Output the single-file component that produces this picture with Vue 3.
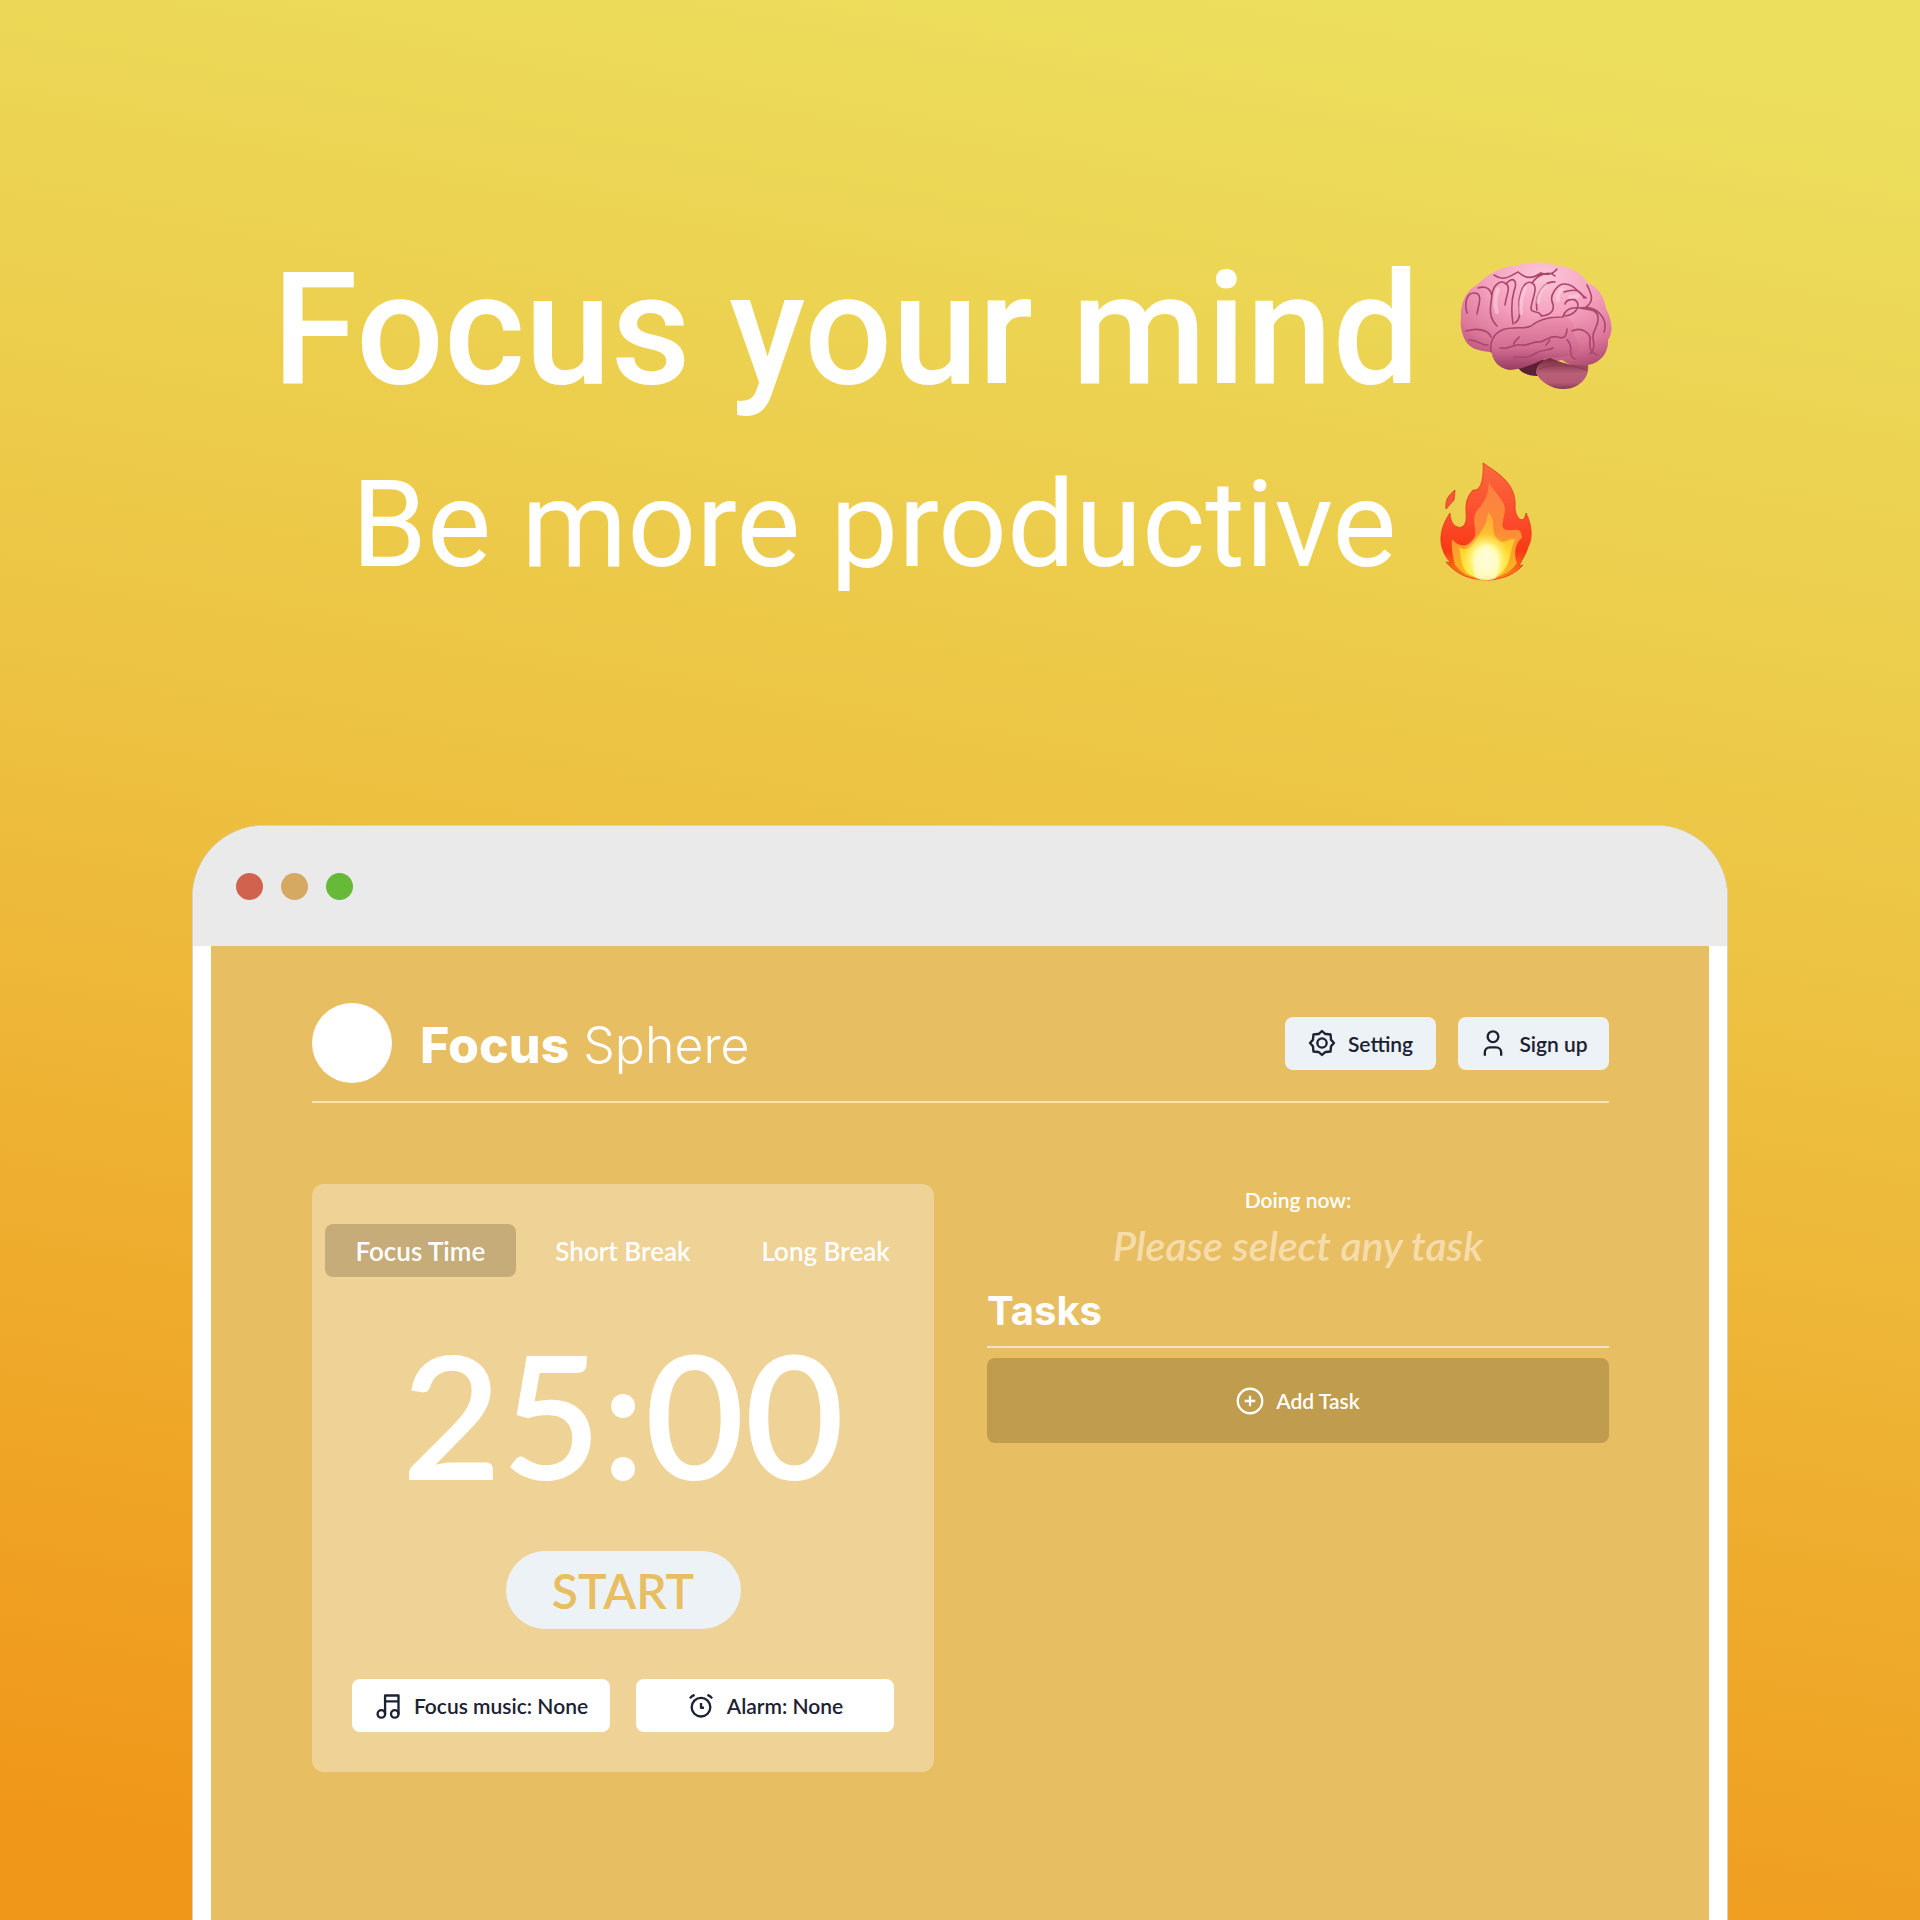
<script setup>
import { ref } from 'vue'
const modes = ['Focus Time', 'Short Break', 'Long Break']
const active = ref('Focus Time')
</script>

<template>
  <main class="page">
    <section class="hero">
      <h1>
        <span>Focus your mind</span>
        <svg class="brain" viewBox="0 0 152 128" aria-hidden="true">
          <defs>
            <radialGradient id="lobe" cx="0.55" cy="0.12" r="0.95">
              <stop offset="0" stop-color="#fdc6d8" />
              <stop offset="0.4" stop-color="#f5a2be" />
              <stop offset="0.75" stop-color="#dc7699" />
              <stop offset="1" stop-color="#a9476c" />
            </radialGradient>
            <linearGradient id="temporal" x1="0" y1="0" x2="0" y2="1">
              <stop offset="0" stop-color="#ee8fae" />
              <stop offset="0.6" stop-color="#d06c90" />
              <stop offset="1" stop-color="#993a60" />
            </linearGradient>
            <linearGradient id="stem" x1="0" y1="0" x2="0" y2="1">
              <stop offset="0" stop-color="#74283f" />
              <stop offset="0.5" stop-color="#b85f76" />
              <stop offset="0.8" stop-color="#b65a73" />
              <stop offset="1" stop-color="#86374f" />
            </linearGradient>
          </defs>
          <path fill="#5c2036" d="M58 106l16-16h20l-10 21-7 3c-8 0-14-2-19-8z" />
          <path fill="url(#lobe)" d="M1 55c-1-13 5-27 16-32C27 12 42 4 58 3c14-4 30-3 41 1 12 1 22 7 28 16 11 5 18 16 19 27 7 12 7 24 2 31 1 12-7 23-20 25-10 3-19 0-26-5-12 3-22 1-31-7L30 90c-12-1-21-4-25-12C1 70 0 63 1 55z" />
          <path fill="url(#stem)" d="M76 111c0-8 6-13 14-15 12 5 26 9 38 7 2 11-8 24-24 24-14 0-24-8-28-16z" />
          <path fill="none" stroke="#8b3a54" stroke-width="1" d="M79 107c14-6 32-4 48 1" />
          <path fill="url(#temporal)" d="M31 86c0-13 9-20 22-20 8-1 12 1 17-1 10-9 21-9 32-10 8 0 12 5 12 13 0 9 6 12 6 18-3 8-20 10-34 10-10 5-22 11-36 12-11-1-19-10-19-22z" />
          <g fill="none" stroke="#a8476b" stroke-width="1.6" stroke-linecap="round">
            <path d="M31 90c-2-16 8-24 22-24 8-1 12 1 18-2 10-8 21-9 32-9 2-8 9-10 17-9 9 2 18 1 18 10 1 9-6 12-5 20 1 7 2 11-3 16" />
            <path d="M7 51c-3-11 0-20 7-20 10 0 4 13 3 21M18 26c9-3 13 2 14 8M37 64c-10-10-6-21-5-31 1-10 8-15 13-12 7 3 1 12 0 22" />
            <path d="M46 22c7-9 12-3 8 7-3 11-3 20-1 33M55 61c9-6 1-17 5-27 2-9 6-16 12-13 7 3 0 16-1 25-1 6 10 2 10 8M72 21c7-10 18-12 23-7M77 48c-3-18 8-29 18-28M81 54c12-1 13-7 12-12-5-9 5-19 10-20 11-1 15 9 23 14M104 30c14-5 18 1 20 6M105 54c10-1 15-9 12-14-3-5-11-2-12 2M34 13c10 7 16 1 24-3 8 7 14 7 23 1 7 3 12 1 16-4M126 45c9-6 5-14 1-22M121 46c18-3 27 13 23 24" />
            <path d="M6 69c10-3 22-2 25 6M9 78c8-1 12 6 19 5M40 86c10 2 13-5 22-3 8 1 9-4 18-3 8-2 10-7 18-5 7 3 9-3 9-8M54 95c9 0 14 2 22-4 7-4 13-2 17-5M54 83c-1-4 3-5 5-8M86 83l4-5M107 78c8 6-1 14 8 19M112 69c10-5 19 3 18 9-1 7 1 13 7 15" />
          </g>
          <g fill="none" stroke="#ffd7e3" stroke-opacity="0.5" stroke-width="4" stroke-linecap="round">
            <path d="M38 27c-3 8-4 15-1 23M65 26c-5 11-5 18-4 25M86 23c-7 6-8 11-8 17M102 27c-5 5-5 8-4 11M110 35l8-1" />
          </g>
        </svg>
      </h1>
      <p class="tagline">
        <span>Be more productive</span>
        <svg class="fire" viewBox="0 0 92 120" aria-hidden="true">
          <defs>
            <linearGradient id="flameOuter" x1="0" y1="0" x2="0" y2="1">
              <stop offset="0" stop-color="#fa6a3c" />
              <stop offset="0.5" stop-color="#fb4a2c" />
              <stop offset="0.75" stop-color="#f83a12" />
              <stop offset="1" stop-color="#fb8a18" />
            </linearGradient>
            <linearGradient id="flameMid" x1="0" y1="0" x2="0" y2="1">
              <stop offset="0" stop-color="#fb8144" />
              <stop offset="0.5" stop-color="#fc8b35" />
              <stop offset="1" stop-color="#ffbd1c" />
            </linearGradient>
            <linearGradient id="flameInner" x1="0" y1="0" x2="0" y2="1">
              <stop offset="0" stop-color="#fda638" />
              <stop offset="0.6" stop-color="#ffd52c" />
              <stop offset="1" stop-color="#fff04a" />
            </linearGradient>
            <radialGradient id="flameCore" cx="0.5" cy="0.6" r="0.5">
              <stop offset="0" stop-color="#fffff2" />
              <stop offset="0.5" stop-color="#fffcb0" />
              <stop offset="1" stop-color="#fff04a" stop-opacity="0" />
            </radialGradient>
          </defs>
          <path fill="#f9583a" stroke="#d8371c" stroke-width="0.8" d="M15 29L14 39 6 48C5 38 9 34 15 29z" />
          <path fill="url(#flameOuter)" stroke="#e73a18" stroke-width="0.8" d="M43 2c15 10 34 21 32 44 0 11 9 19 11 6 6 12 7 25 2 34-2 8-6 12-9 19l4-1c-7 8-18 14-34 15-19 0-32-5-43-18l5 1C4 95 0 85 1 75c1-10 5-17 9-23 0 10 6 16 12 14 10-7-3-22 11-37 7 1 11-8 10-27z" />
          <path fill="url(#flameMid)" d="M49 22c5 9 16 17 16 27-1 11-7 20 4 20 8 0 12-3 13 8-8 5-8 20-5 25-6 10-19 15-32 16-16-1-23-6-30-14-2-8-4-16-3-26 6 8 15 9 21 1 7-9-5-20 6-32 6-6 9-14 10-25z" />
          <path fill="url(#flameInner)" d="M48 51c10 9 1 20 10 28 6 5 10-2 17-1-6 13-3 27-17 36-12 5-24 3-31-2-7-9-6-18-8-26 7 5 13 0 16-6 5-9 12-15 13-29z" />
          <ellipse cx="46" cy="93" rx="24" ry="26" fill="url(#flameCore)" />
          <path fill="#fffbd0" d="M46 84c8 9 18 17 10 33-5 3-15 3-20 0-7-12 3-24 10-33z" opacity="0.75" />
        </svg>
      </p>
    </section>

    <section class="window">
      <div class="titlebar"><i class="red"></i><i class="amber"></i><i class="green"></i></div>
      <div class="screen">
        <header>
          <div class="brand"><span class="logo"></span><h2><b>Focus</b> Sphere</h2></div>
          <nav>
            <button class="btn pale">
              <svg class="icon" viewBox="0 0 24 24">
                <path d="M12 1.700L14.700 4.200Q15 4.500 15.500 4.300L19.300 4.700L19.700 8.500Q19.500 9 19.800 9.300L22.300 12L19.800 14.700Q19.500 15 19.700 15.500L19.300 19.300L15.500 19.700Q15 19.500 14.700 19.800L12 22.300L9.300 19.800Q9 19.500 8.500 19.700L4.700 19.300L4.300 15.500Q4.500 15 4.200 14.700L1.700 12L4.200 9.300Q4.500 9 4.300 8.500L4.700 4.700L8.500 4.300Q9 4.500 9.300 4.200z" />
                <circle cx="12" cy="12" r="4" />
              </svg>
              <span>Setting</span>
            </button>
            <button class="btn pale">
              <svg class="icon" viewBox="0 0 24 24">
                <circle cx="12" cy="6.600" r="4.600" />
                <path d="M5 23v-3a4.300 4.300 0 0 1 4.300-4.300h5.400a4.300 4.300 0 0 1 4.300 4.300v3" />
              </svg>
              <span>Sign up</span>
            </button>
          </nav>
        </header>
        <div class="columns">
          <section class="timer">
            <div class="modes">
              <button v-for="m in modes" :key="m" :class="{ on: m === active }" @click="active = m">{{ m }}</button>
            </div>
            <time>25:00</time>
            <button class="start">START</button>
            <div class="sounds">
              <button class="btn white">
                <svg class="icon" viewBox="0 0 24 24">
                  <path d="M9.500 19V3H21v16M9.500 8H21" /><circle cx="6.300" cy="18.800" r="3.200" /><circle cx="17.800" cy="18.800" r="3.200" />
                </svg>
                <span>Focus music: None</span>
              </button>
              <button class="btn white">
                <svg class="icon" viewBox="0 0 24 24">
                  <circle cx="12" cy="13" r="8" /><path d="M12 9.500v4h2.500M2.500 5.500Q4 3.500 6.500 2.500M21.500 5.500Q20 3.500 17.500 2.500" />
                </svg>
                <span>Alarm: None</span>
              </button>
            </div>
          </section>
          <section class="tasks">
            <p class="doing">Doing now:</p>
            <p class="hint">Please select any task</p>
            <h3>Tasks</h3>
            <button class="add">
              <svg class="icon" viewBox="0 0 24 24">
                <circle cx="12" cy="12" r="10.500" /><path d="M12 7.500v9M7.500 12h9" />
              </svg>
              <span>Add Task</span>
            </button>
          </section>
        </div>
      </div>
    </section>
  </main>
</template>

<style>
body { margin: 0; }
</style>

<style scoped>
* { box-sizing: border-box; }
h1, h2, h3, p { margin: 0; font-weight: 400; }
button { border: 0; font: inherit; color: inherit; cursor: pointer; padding: 0; }
.page {
  min-height: 100vh; display: flex; flex-direction: column; align-items: center;
  color: #fff; font-family: Lato, sans-serif;
  background: linear-gradient(190deg, #ecdf5d 5%, #edc343 44%, #f09618 96%);
}
.hero { padding: 230px 36px 205px 0; display: flex; flex-direction: column; align-items: center; font-family: Roboto, sans-serif; white-space: nowrap; }
h1 { display: flex; align-items: center; gap: 40px; font-size: 155px; line-height: 200px; font-weight: 500; }
.brain { width: 152px; height: 128px; margin-bottom: 8px; }
.tagline { display: flex; align-items: center; gap: 44px; font-size: 121px; line-height: 190px; }
.fire { width: 92px; height: 120px; margin-bottom: 8px; }
.window { width: 80%; flex: 1; display: flex; flex-direction: column; border: 1px solid #d6d2c8; border-bottom: 0; border-radius: 72px 72px 0 0; overflow: hidden; background: #fff; }
.titlebar { height: 120px; display: flex; align-items: center; gap: 18px; padding-left: 43px; background: #eaeaea; }
.titlebar i { width: 27px; height: 27px; border-radius: 50%; }
.red { background: #d1634e; }
.amber { background: #d6a963; }
.green { background: #66ba37; }
.screen { flex: 1; margin: 0 18px; padding: 57px 100px 57px 101px; background: #e8be62; }
header { display: flex; justify-content: space-between; align-items: center; padding-bottom: 18px; border-bottom: 2px solid #fae3ac; }
.brand { display: flex; align-items: center; gap: 28px; }
.logo { width: 80px; height: 80px; border-radius: 50%; background: #fff; }
h2 { padding-top: 4px; font-family: Inter, sans-serif; font-size: 50px; line-height: 64px; font-weight: 300; }
h2 b { font-weight: 800; }
nav { display: flex; gap: 22px; }
.btn { height: 53px; border-radius: 8px; display: flex; align-items: center; justify-content: center; gap: 12px; font-size: 21px; font-weight: 600; color: #1c2133; }
.icon { width: 28px; height: 28px; fill: none; stroke: currentColor; stroke-width: 2; stroke-linejoin: round; }
.pale { width: 151px; background: #edf2f6; }
.white { flex: 1; background: #fff; }
.columns { display: grid; grid-template-columns: 1fr 1fr; gap: 53px; margin-top: 81px; }
.timer { border-radius: 12px; padding: 40px 13px; background: #efd295; display: flex; flex-direction: column; align-items: center; }
.modes { width: 100%; display: grid; grid-template-columns: repeat(3, 1fr); gap: 12px; }
.modes button { height: 53px; border-radius: 8px; font-size: 26px; font-weight: 600; background: none; }
.modes .on { background: #c6ac78; }
time { font-size: 172px; line-height: 216px; margin-top: 29px; font-weight: 600; }
.start { width: 235px; height: 78px; border-radius: 39px; margin-top: 29px; background: #edf2f6; color: #e8be62; font-size: 48px; font-weight: 600; }
.sounds { width: 100%; padding: 0 27px; margin-top: 50px; display: flex; gap: 26px; }
.tasks { text-align: center; }
.doing { font-size: 21px; line-height: 32px; font-weight: 600; }
.hint { font-size: 41px; line-height: 60px; font-style: italic; font-weight: 600; color: #f6dcab; }
h3 { font-family: Inter, sans-serif; font-size: 40px; line-height: 70px; font-weight: 700; text-align: left; border-bottom: 2px solid #f3e3c4; }
.add { width: 100%; height: 85px; margin-top: 10px; border-radius: 8px; background: #bf9c4e; display: flex; align-items: center; justify-content: center; gap: 12px; font-size: 21px; font-weight: 600; }
</style>
